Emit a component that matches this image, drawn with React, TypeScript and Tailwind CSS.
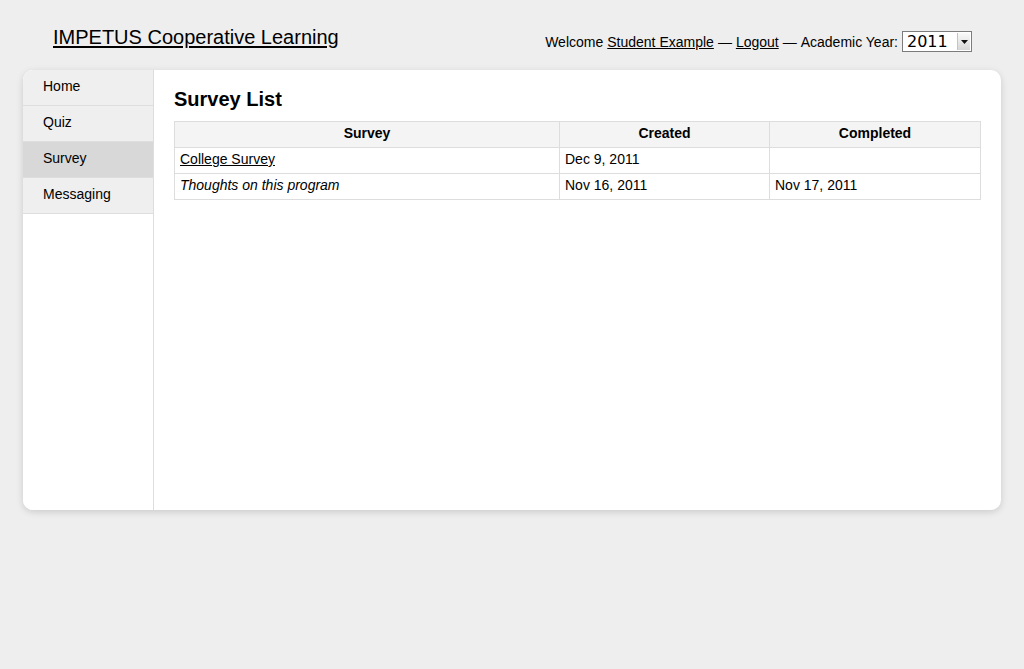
import { useState } from "react";

type Survey = {
  title: string;
  created: string;
  completed: string;
  open: boolean;
};

const navItems = ["Home", "Quiz", "Survey", "Messaging"];

const surveys: Survey[] = [
  { title: "College Survey", created: "Dec 9, 2011", completed: "", open: true },
  { title: "Thoughts on this program", created: "Nov 16, 2011", completed: "Nov 17, 2011", open: false },
];

const App = () => {
  const [year, setYear] = useState("2011");
  const active = "Survey";

  return (
    <div
      className="min-h-[669px] bg-[#eeeeee] px-[23px] text-[14px] text-black"
      style={{ fontFamily: '"Liberation Sans", Arial, sans-serif' }}
    >
      {/* Header */}
      <div className="flex items-end justify-between pl-[30px] pr-[29px] h-[70px] pb-[21px]">
        <a href="#" className="text-[20px] leading-[24px] underline underline-offset-[2px]">
          IMPETUS Cooperative Learning
        </a>
        <div className="flex items-center gap-[4px] leading-[18px] mb-[-3px]">
          <span>Welcome</span>
          <a href="#" className="underline">Student Example</a>
          <span>—</span>
          <a href="#" className="underline">Logout</a>
          <span>—</span>
          <span>Academic Year:</span>
          <div className="relative w-[70px] h-[21px]">
            <select
              className="appearance-none w-full h-full border border-[#7c7c7c] bg-white pl-[4px] text-[16px] leading-[19px] outline-none"
              style={{ fontFamily: '"DejaVu Sans", Verdana, sans-serif' }}
              value={year}
              onChange={(e) => setYear(e.target.value)}
            >
              <option value="2011">2011</option>
              <option value="2010">2010</option>
            </select>
            <div className="pointer-events-none absolute right-[2px] top-[2px] bottom-[2px] w-[13px] flex items-center justify-center bg-gradient-to-b from-[#fafafa] to-[#d6d6d6] border-l border-[#c4c4c4]">
              <svg width="7" height="4" viewBox="0 0 7 4">
                <path d="M0 0 L7 0 L3.5 4 Z" fill="#111" />
              </svg>
            </div>
          </div>
        </div>
      </div>

      {/* Card */}
      <div className="flex h-[440px] bg-white rounded-[10px] shadow-[0_2px_7px_rgba(0,0,0,0.15)] overflow-hidden">
        <nav className="w-[131px] shrink-0 border-r border-[#dddddd] bg-white">
          {navItems.map((item) => (
            <a
              key={item}
              href="#"
              className={`block h-[36px] pl-[20px] pt-[7px] leading-[18px] border-b border-[#dedede] ${
                item === active ? "bg-[#d8d8d8]" : "bg-[#efefef]"
              }`}
            >
              {item}
            </a>
          ))}
        </nav>

        <main className="flex-1 pl-[20px] pr-[20px] pt-[17px]">
          <h1 className="text-[20px] leading-[24px] font-bold mb-[10px]">Survey List</h1>
          <table className="w-[807px] border-collapse border border-[#dddddd]">
            <thead>
              <tr className="bg-[#f4f4f4] h-[26px]">
                <th className="w-[385px] border border-[#dddddd] font-bold text-center pb-[2px]">Survey</th>
                <th className="w-[210px] border border-[#dddddd] font-bold text-center pb-[2px]">Created</th>
                <th className="border border-[#dddddd] font-bold text-center pb-[2px]">Completed</th>
              </tr>
            </thead>
            <tbody>
              {surveys.map((s) => (
                <tr key={s.title} className="h-[26px]">
                  <td className="border border-[#dddddd] px-[5px] pb-[2px]">
                    {s.open ? (
                      <a href="#" className="underline">{s.title}</a>
                    ) : (
                      <em>{s.title}</em>
                    )}
                  </td>
                  <td className="border border-[#dddddd] px-[5px] pb-[2px]">{s.created}</td>
                  <td className="border border-[#dddddd] px-[5px] pb-[2px]">{s.completed}</td>
                </tr>
              ))}
            </tbody>
          </table>
        </main>
      </div>
    </div>
  );
};

export default App;
